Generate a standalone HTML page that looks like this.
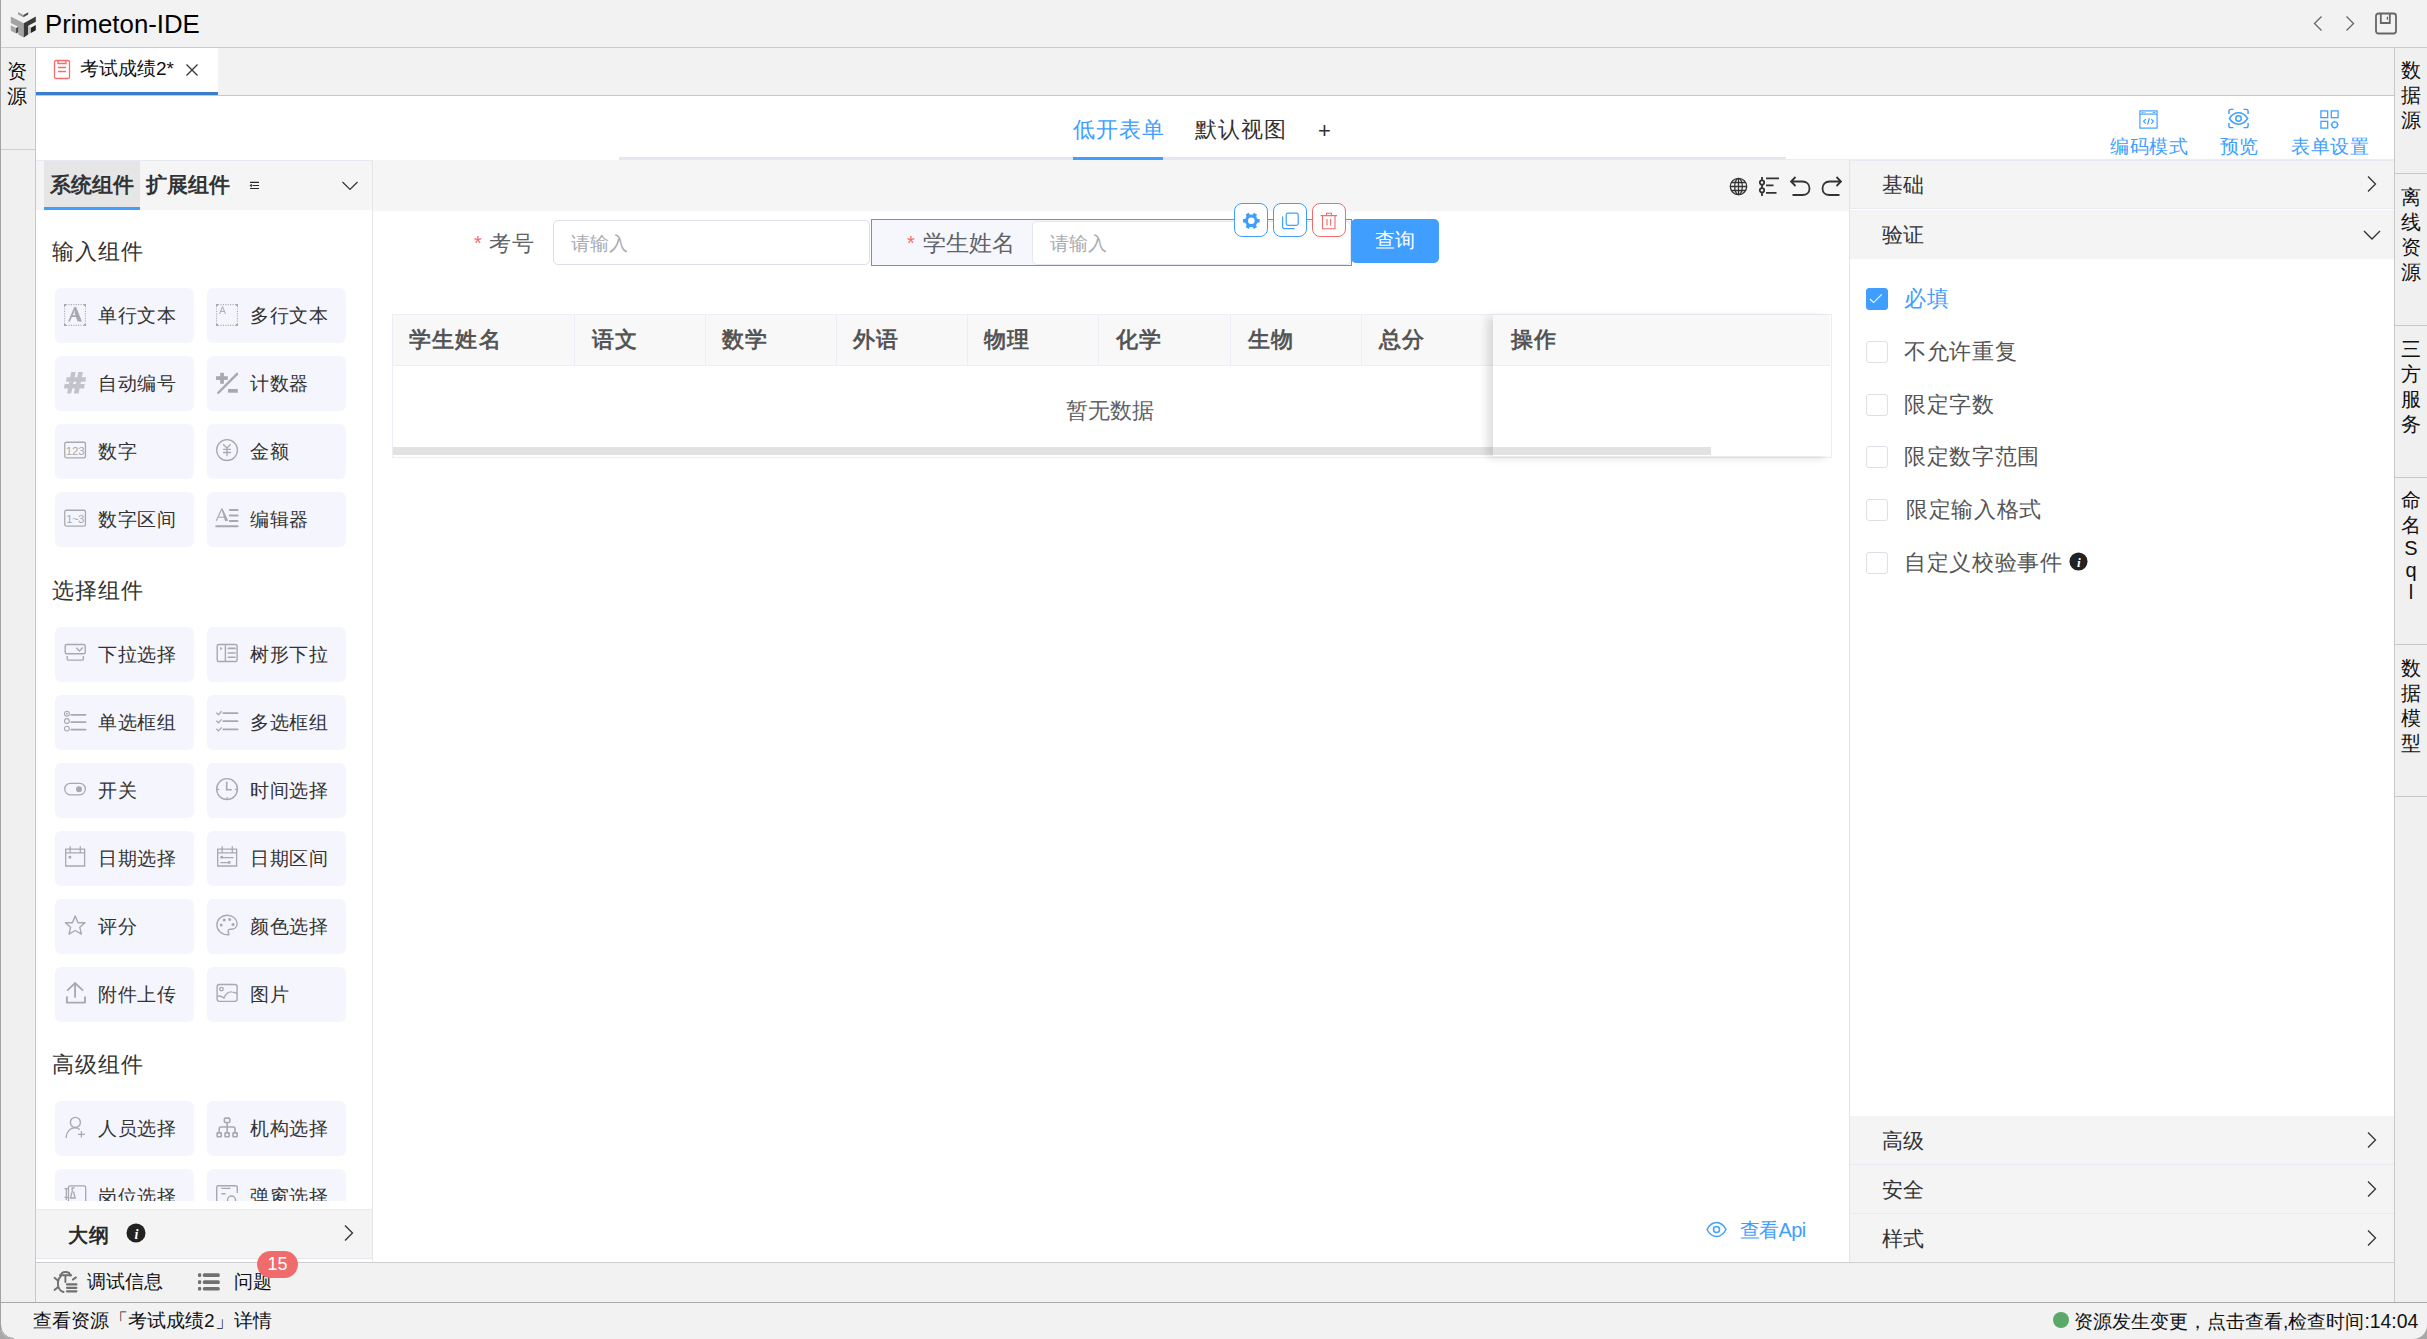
<!DOCTYPE html>
<html><head><meta charset="utf-8">
<style>
*{box-sizing:border-box;margin:0;padding:0}
html,body{width:2427px;height:1339px;overflow:hidden;background:#fff;font-family:"Liberation Sans",sans-serif;color:#333}
.a{position:absolute}
svg{display:block}
.vt{position:absolute;left:2398px;width:26px;font-size:20px;line-height:25px;color:#111;text-align:center}
.card{position:absolute;width:139px;height:55px;background:#f5f6fd;border-radius:6px}
.card .ic{position:absolute;left:8px;top:15px;width:24px;height:24px;overflow:visible}
.card .tx{position:absolute;left:43px;top:0px;line-height:55px;font-size:19px;letter-spacing:0.6px;color:#333;white-space:nowrap}
.sec{position:absolute;left:52px;font-size:22px;letter-spacing:1px;color:#333;line-height:30px}
.th{position:absolute;top:314px;height:52px;line-height:52px;font-size:22px;letter-spacing:1.2px;font-weight:bold;color:#555;padding-left:16px;border-right:1px solid #ebeef5}
.cb{position:absolute;left:1866px;width:22px;height:22px;border:1px solid #dcdfe6;border-radius:3px;background:#fff}
.cbl{position:absolute;left:1904px;font-size:22.2px;letter-spacing:0.7px;color:#555;line-height:30px;white-space:nowrap}
.rh{position:absolute;left:1850px;width:544px;height:49px;background:#f4f4f5;border-bottom:1px solid #e7eaf2}
.rh .t{position:absolute;left:32px;top:0;line-height:49px;font-size:21px;color:#333}
.rh svg{position:absolute;left:516px;top:15px}
</style></head><body>

<!-- title bar -->
<div class="a" style="left:0;top:0;width:2427px;height:48px;background:#f2f2f2;border-bottom:1px solid #cccccc"></div>
<div class="a" style="left:45px;top:5px;font-size:25.8px;line-height:38px;color:#000">Primeton-IDE</div>

<!-- left strip -->
<div class="a" style="left:0;top:48px;width:36px;height:1254px;background:#f0f0f0;border-right:1px solid #c8c8c8"></div>
<div class="a" style="left:0;top:149px;width:35px;height:1px;background:#cfcfcf"></div>
<div class="a" style="left:5px;top:59px;width:24px;font-size:20px;line-height:25px;color:#111;text-align:center">资<br>源</div>

<!-- right strip -->
<div class="a" style="left:2394px;top:48px;width:33px;height:1254px;background:#f0f0f0;border-left:1px solid #c8c8c8"></div>
<div class="a" style="left:2395px;top:173px;width:32px;height:1px;background:#c8c8c8"></div>
<div class="a" style="left:2395px;top:325px;width:32px;height:1px;background:#c8c8c8"></div>
<div class="a" style="left:2395px;top:477px;width:32px;height:1px;background:#c8c8c8"></div>
<div class="a" style="left:2395px;top:644px;width:32px;height:1px;background:#c8c8c8"></div>
<div class="a" style="left:2395px;top:796px;width:32px;height:1px;background:#c8c8c8"></div>
<div class="vt" style="top:58px">数<br>据<br>源</div>
<div class="vt" style="top:185px">离<br>线<br>资<br>源</div>
<div class="vt" style="top:337px">三<br>方<br>服<br>务</div>
<div class="vt" style="top:488px">命<br>名</div><div class="vt" style="top:537px;line-height:22px">S<br>q<br>l</div>
<div class="vt" style="top:656px">数<br>据<br>模<br>型</div>

<!-- tab bar -->
<div class="a" style="left:36px;top:48px;width:2358px;height:48px;background:#f2f2f2;border-bottom:1px solid #c8c8c8"></div>
<div class="a" style="left:36px;top:48px;width:182px;height:47px;background:#fff;border-bottom:3px solid #3b7fca"></div>
<div class="a" style="left:80px;top:54px;font-size:19px;line-height:30px;color:#111">考试成绩2*</div>

<!-- designer header -->
<div class="a" style="left:36px;top:96px;width:2358px;height:64px;background:#fff"></div>
<div class="a" style="left:619px;top:157px;width:1167px;height:3px;background:#e4e7ed"></div>
<div class="a" style="left:1073px;top:157px;width:90px;height:3px;background:#409eff"></div>
<div class="a" style="left:1073px;top:115px;font-size:22px;letter-spacing:1px;line-height:30px;color:#409eff">低开表单</div>
<div class="a" style="left:1195px;top:115px;font-size:22px;letter-spacing:1px;line-height:30px;color:#333">默认视图</div>
<div class="a" style="left:1318px;top:116px;font-size:22px;line-height:30px;color:#333">+</div>
<div class="a" style="left:2110px;top:132px;font-size:19px;letter-spacing:0.6px;line-height:30px;color:#409eff">编码模式</div>
<div class="a" style="left:2220px;top:132px;font-size:19px;line-height:30px;color:#409eff">预览</div>
<div class="a" style="left:2291px;top:132px;font-size:19px;letter-spacing:0.6px;line-height:30px;color:#409eff">表单设置</div>

<!-- left panel -->
<div class="a" style="left:36px;top:160px;width:337px;height:1102px;background:#fff;border-right:1px solid #e6e6e6"></div>
<div class="a" style="left:36px;top:160px;width:336px;height:50px;background:#f5f5f5"></div>
<div class="a" style="left:44px;top:160px;width:96px;height:50px;background:#e6e6e6;border-bottom:3px solid #409eff"></div>
<div class="a" style="left:50px;top:170px;font-size:21px;line-height:30px;font-weight:bold;color:#333">系统组件</div>
<div class="a" style="left:146px;top:170px;font-size:21px;line-height:30px;font-weight:bold;color:#333">扩展组件</div>

<div class="a" style="left:0;top:0;width:2427px;height:1339px;clip-path:inset(210px 0 138px 0)">
<div class="card" style="left:55px;top:288px"><svg class="ic" viewBox="0 0 24 24" width="24" height="24"><g fill="#a8a9ae"><path d="M1 1 H4.5 L1 4.5 Z M23 1 H19.5 L23 4.5 Z M1 23 H4.5 L1 19.5 Z M23 23 H19.5 L23 19.5 Z"/></g><path d="M5.5 1.6 H18.5 M5.5 22.4 H18.5 M1.6 5.5 V18.5 M22.4 5.5 V18.5" fill="none" stroke="#a8a9ae" stroke-width="1.1" stroke-dasharray="1.1 1.3"/><path d="M12.2 4.2 L6 18.5 M12.2 4.2 L18 18.5 M8.3 13.2 H15.8" fill="none" stroke="#a8a9ae" stroke-width="1.8"/><path d="M12.2 4.2 L17.8 18.6 H14.6 L11.6 10" fill="#a8a9ae"/></svg><div class="tx">单行文本</div></div>
<div class="card" style="left:207px;top:288px"><svg class="ic" viewBox="0 0 24 24" width="24" height="24"><g fill="#a8a9ae"><path d="M1 1 H4.5 L1 4.5 Z M23 1 H19.5 L23 4.5 Z M1 23 H4.5 L1 19.5 Z M23 23 H19.5 L23 19.5 Z"/></g><path d="M5.5 1.6 H18.5 M5.5 22.4 H18.5 M1.6 5.5 V18.5 M22.4 5.5 V18.5" fill="none" stroke="#a8a9ae" stroke-width="1.1" stroke-dasharray="1.1 1.3"/><path d="M7.5 3.5 L4.5 11 M7.5 3.5 L10.5 11 M5.6 8.4 H9.4" fill="none" stroke="#a8a9ae" stroke-width="1"/></svg><div class="tx">多行文本</div></div>
<div class="card" style="left:55px;top:356px"><svg class="ic" viewBox="0 0 24 24" width="24" height="24"><g fill="#c3c4ca"><polygon points="8.2,1 12.7,1 8.2,22.6 4,22.6"/><polygon points="15.2,1 19.9,1 15.6,22.6 10.9,22.6"/><polygon points="3.6,6.2 23,6.2 22.5,10.7 3,10.7"/><polygon points="1.6,13.1 21.7,13.1 21.2,17.6 1,17.6"/></g></svg><div class="tx">自动编号</div></div>
<div class="card" style="left:207px;top:356px"><svg class="ic" viewBox="0 0 24 24" width="24" height="24"><g fill="#a8a9ae"><rect x="1" y="5.2" width="11.8" height="3.7"/><rect x="5.2" y="1.8" width="3.7" height="11"/><rect x="13" y="18" width="9.8" height="3.7"/><polygon points="21.5,1.8 23,1.8 23,3.8 4,22.8 2,22.8 2,21.6"/></g></svg><div class="tx">计数器</div></div>
<div class="card" style="left:55px;top:424px"><svg class="ic" viewBox="0 0 24 24" width="24" height="24"><rect x="1.75" y="3.25" width="20.7" height="15.6" rx="1.6" fill="none" stroke="#a8a9ae" stroke-width="1.3"/><text x="12.1" y="15.7" font-family="Liberation Sans" font-size="11.6" fill="#a8a9ae" text-anchor="middle" letter-spacing="-0.3">123</text></svg><div class="tx">数字</div></div>
<div class="card" style="left:207px;top:424px"><svg class="ic" viewBox="0 0 24 24" width="24" height="24"><circle cx="12.05" cy="11.1" r="10.4" fill="none" stroke="#a8a9ae" stroke-width="1.3"/><path d="M8.1 5.2 L12 9 L15.7 5.2 M12 9 V17.3 M8.1 10.3 H15.9 M8.1 13.5 H15.9" fill="none" stroke="#a8a9ae" stroke-width="1.3"/></svg><div class="tx">金额</div></div>
<div class="card" style="left:55px;top:492px"><svg class="ic" viewBox="0 0 24 24" width="24" height="24"><rect x="1.75" y="3.25" width="20.7" height="15.8" rx="1.6" fill="none" stroke="#a8a9ae" stroke-width="1.3"/><text x="12.1" y="15.6" font-family="Liberation Sans" font-size="11.4" fill="#a8a9ae" text-anchor="middle" letter-spacing="-0.6">1~3</text></svg><div class="tx">数字区间</div></div>
<div class="card" style="left:207px;top:492px"><svg class="ic" viewBox="0 0 24 24" width="24" height="24"><path d="M6.8 1.8 L1.3 13.8 M6.8 1.8 L12.6 13.8" fill="none" stroke="#a8a9ae" stroke-width="1.2"/><polygon points="6.4,1.8 7.6,1.8 12.9,13.9 10,13.9" fill="#a8a9ae"/><path d="M3.5 10.2 H10.5" stroke="#a8a9ae" stroke-width="1.1"/><path d="M14.8 3 H22.6 M14.8 8.5 H22.6 M14.8 13.9 H22.6 M1.2 19.2 H22.6" stroke="#a8a9ae" stroke-width="2" stroke-linecap="round"/></svg><div class="tx">编辑器</div></div>
<div class="card" style="left:55px;top:627px"><svg class="ic" viewBox="0 0 24 24" width="24" height="24"><rect x="2.2" y="2.5" width="20" height="9.2" rx="1.5" fill="none" stroke="#a8a9ae" stroke-width="1.4"/><path d="M13.3 5.8 L16.4 9 L19.8 5.6" fill="none" stroke="#a8a9ae" stroke-width="1.4"/><path d="M4.1 14.1 V17 Q4.1 18.1 5.2 18.1 H19.3 Q20.4 18.1 20.4 17 V14.1" fill="none" stroke="#a8a9ae" stroke-width="1.4"/></svg><div class="tx">下拉选择</div></div>
<div class="card" style="left:207px;top:627px"><svg class="ic" viewBox="0 0 24 24" width="24" height="24"><rect x="2.2" y="2.5" width="19.9" height="17" rx="1.5" fill="none" stroke="#a8a9ae" stroke-width="1.4"/><path d="M10.4 2.5 V19.5" fill="none" stroke="#a8a9ae" stroke-width="1.4"/><polygon points="5.2,5 7.6,6.6 5.2,8.2" fill="#a8a9ae"/><path d="M13.3 6.4 H20.1 M13.3 11 H20.1 M13.3 15.3 H20.1" stroke="#a8a9ae" stroke-width="1.6" stroke-linecap="round"/></svg><div class="tx">树形下拉</div></div>
<div class="card" style="left:55px;top:695px"><svg class="ic" viewBox="0 0 24 24" width="24" height="24"><circle cx="3.9" cy="3.7" r="2.4" fill="none" stroke="#a8a9ae" stroke-width="1.1"/><circle cx="3.9" cy="3.7" r="0.9" fill="#a8a9ae"/><circle cx="3.9" cy="11" r="2.4" fill="none" stroke="#a8a9ae" stroke-width="1.1"/><circle cx="3.9" cy="18.6" r="2.4" fill="none" stroke="#a8a9ae" stroke-width="1.1"/><path d="M8.3 4.8 H22.6 M8.3 12.2 H22.6 M8.3 19.6 H22.6" stroke="#a8a9ae" stroke-width="1.8" stroke-linecap="round"/></svg><div class="tx">单选框组</div></div>
<div class="card" style="left:207px;top:695px"><svg class="ic" viewBox="0 0 24 24" width="24" height="24"><path d="M1.3 2.6 L3.4 4.7 L6.6 1.3 M1.3 10.7 L3.4 12.8 L6.6 9.4 M1.3 18.8 L3.4 20.9 L6.6 17.5" fill="none" stroke="#a8a9ae" stroke-width="1.3"/><path d="M8.3 3.1 H22.6 M8.3 11.1 H22.6 M8.3 19.4 H22.6" stroke="#a8a9ae" stroke-width="1.8" stroke-linecap="round"/></svg><div class="tx">多选框组</div></div>
<div class="card" style="left:55px;top:763px"><svg class="ic" viewBox="0 0 24 24" width="24" height="24"><rect x="1.7" y="5.4" width="20.7" height="11.4" rx="5.7" fill="none" stroke="#a8a9ae" stroke-width="1.3"/><circle cx="16" cy="11.2" r="3" fill="#a8a9ae"/></svg><div class="tx">开关</div></div>
<div class="card" style="left:207px;top:763px"><svg class="ic" viewBox="0 0 24 24" width="24" height="24"><circle cx="12.05" cy="11.05" r="10.4" fill="none" stroke="#a8a9ae" stroke-width="1.4"/><path d="M11.7 3.6 V11.8 H16.7" fill="none" stroke="#a8a9ae" stroke-width="1.6"/><path d="M2 11.3 H4.4 M19.9 11.3 H22 M12.1 19 V21.2" fill="none" stroke="#a8a9ae" stroke-width="1.2"/></svg><div class="tx">时间选择</div></div>
<div class="card" style="left:55px;top:831px"><svg class="ic" viewBox="0 0 24 24" width="24" height="24"><path d="M2.7 3.2 H21.6 V20 H2.7 Z M2.7 6.8 H21.6 M7.2 0.2 V6.6 M17.3 0.2 V6.6" fill="none" stroke="#a8a9ae" stroke-width="1.3"/><rect x="5.6" y="9.9" width="2.6" height="2.6" fill="#a8a9ae"/></svg><div class="tx">日期选择</div></div>
<div class="card" style="left:207px;top:831px"><svg class="ic" viewBox="0 0 24 24" width="24" height="24"><path d="M2.7 3.2 H21.6 V20 H2.7 Z M2.7 6.8 H21.6 M7.2 0.2 V6.6 M17.3 0.2 V6.6" fill="none" stroke="#a8a9ae" stroke-width="1.3"/><path d="M5.4 11.6 H18.6 M5.4 16.6 H15" stroke="#a8a9ae" stroke-width="1.4"/><rect x="5.5" y="9.9" width="2.5" height="2.4" fill="#a8a9ae"/><rect x="13" y="15.1" width="2.5" height="2.5" fill="#a8a9ae"/></svg><div class="tx">日期区间</div></div>
<div class="card" style="left:55px;top:899px"><svg class="ic" viewBox="0 0 24 24" width="24" height="24"><polygon points="12.2,1.9 15,8.7 22,8.8 16.8,13.3 18.4,20.1 12.2,16.5 6,20.1 7.6,13.3 2.4,8.8 9.4,8.7" fill="none" stroke="#a8a9ae" stroke-width="1.4" stroke-linejoin="round"/></svg><div class="tx">评分</div></div>
<div class="card" style="left:207px;top:899px"><svg class="ic" viewBox="0 0 24 24" width="24" height="24"><path d="M13.3 20.8 C6.6 20.8 1.9 16.4 1.9 11 C1.9 5.5 6.5 1.2 12 1.2 C17.8 1.2 22.1 5 22.1 9.8 C22.1 13.2 19.5 15.3 16 15.3 H15.3 C13.5 15.3 12.6 16.6 13.3 18.1 C13.9 19.4 14.2 20.8 13.3 20.8 Z" fill="none" stroke="#a8a9ae" stroke-width="1.4"/><circle cx="6.2" cy="11" r="1.5" fill="#a8a9ae"/><circle cx="9.2" cy="6.1" r="1.5" fill="#a8a9ae"/><circle cx="14.7" cy="5.5" r="1.5" fill="#a8a9ae"/><circle cx="18" cy="10.5" r="1.5" fill="#a8a9ae"/></svg><div class="tx">颜色选择</div></div>
<div class="card" style="left:55px;top:967px"><svg class="ic" viewBox="0 0 24 24" width="24" height="24"><path d="M4.7 8.2 L12.1 1 L19.6 8.2 M12.1 1.8 V14.9" fill="none" stroke="#a8a9ae" stroke-width="1.8" stroke-linecap="round"/><path d="M3.9 15.2 V20.6 H22 V15.2" fill="none" stroke="#a8a9ae" stroke-width="1.9" stroke-linecap="round" stroke-linejoin="round"/></svg><div class="tx">附件上传</div></div>
<div class="card" style="left:207px;top:967px"><svg class="ic" viewBox="0 0 24 24" width="24" height="24"><rect x="2.1" y="2.5" width="20" height="16.9" rx="2.3" fill="none" stroke="#a8a9ae" stroke-width="1.4"/><circle cx="6.5" cy="7.1" r="1.8" fill="none" stroke="#a8a9ae" stroke-width="1.3"/><path d="M2.1 14.3 C5 13.3 7 14.4 8.9 16 C10.8 11.2 13.8 9.7 16.7 9.9 C19 10 20.6 10.8 22.1 11.6" fill="none" stroke="#a8a9ae" stroke-width="1.4"/></svg><div class="tx">图片</div></div>
<div class="card" style="left:55px;top:1101px"><svg class="ic" viewBox="0 0 24 24" width="24" height="24"><circle cx="12.4" cy="6.4" r="5" fill="none" stroke="#a8a9ae" stroke-width="1.4"/><path d="M3.1 21.4 C3.5 15.5 7.3 11.8 12 11.8 C13.8 11.8 15.2 12.3 16.4 13.2" fill="none" stroke="#a8a9ae" stroke-width="1.4" stroke-linecap="round"/><path d="M14.9 18.4 H21.8 M18.4 15.2 V21.6" fill="none" stroke="#a8a9ae" stroke-width="1.3"/></svg><div class="tx">人员选择</div></div>
<div class="card" style="left:207px;top:1101px"><svg class="ic" viewBox="0 0 24 24" width="24" height="24"><rect x="9.4" y="2.1" width="5.4" height="4.4" rx="1" fill="none" stroke="#a8a9ae" stroke-width="1.6"/><path d="M12.1 6.5 V16.2 M4.2 16.2 V12.5 Q4.2 11 5.7 11 H18.5 Q20 11 20 12.5 V16.2" fill="none" stroke="#a8a9ae" stroke-width="1.6"/><rect x="2.1" y="16.9" width="4.2" height="3.9" rx="0.6" fill="none" stroke="#a8a9ae" stroke-width="1.6"/><rect x="10" y="16.9" width="4.2" height="3.9" rx="0.6" fill="none" stroke="#a8a9ae" stroke-width="1.6"/><rect x="18" y="16.9" width="4.2" height="3.9" rx="0.6" fill="none" stroke="#a8a9ae" stroke-width="1.6"/></svg><div class="tx">机构选择</div></div>
<div class="card" style="left:55px;top:1169px"><svg class="ic" viewBox="0 0 24 24" width="24" height="24"><path d="M5.5 22 V3.5 Q5.5 1.8 7.2 1.8 H21 Q22.7 1.8 22.7 3.5 V22" fill="none" stroke="#a8a9ae" stroke-width="1.3"/><path d="M1.5 4.6 H5 M3.3 4.6 V16 M1.5 13.4 H5" fill="none" stroke="#a8a9ae" stroke-width="1.3"/><path d="M8.5 3.8 H11.8 M9.2 3.8 V7.5 L7.5 14 H12.2 L10.5 7.5" fill="none" stroke="#a8a9ae" stroke-width="1.3"/></svg><div class="tx">岗位选择</div></div>
<div class="card" style="left:207px;top:1169px"><svg class="ic" viewBox="0 0 24 24" width="24" height="24"><path d="M1.7 22 V3.5 Q1.7 1.8 3.4 1.8 H20.6 Q22.3 1.8 22.3 3.5 V9" fill="none" stroke="#a8a9ae" stroke-width="1.4"/><path d="M6.4 4.4 H15.5 M6.4 9.7 H10.5" stroke="#a8a9ae" stroke-width="1.4"/><circle cx="16.5" cy="16" r="4" fill="none" stroke="#a8a9ae" stroke-width="1.4"/></svg><div class="tx">弹窗选择</div></div>
</div>
<div class="sec" style="top:237px">输入组件</div>
<div class="sec" style="top:576px">选择组件</div>
<div class="sec" style="top:1050px">高级组件</div>

<!-- canvas -->
<div class="a" style="left:373px;top:160px;width:1476px;height:51px;background:#f5f5f5"></div>
<!-- toolbar icons -->
<svg class="a" style="left:1729px;top:177px" width="19" height="19" viewBox="0 0 19 19" fill="none" stroke="#333" stroke-width="1.3"><circle cx="9.5" cy="9.5" r="8.2"/><path d="M1.3 9.5 H17.7 M9.5 1.3 V17.7 M3 5.5 H16 M3 13.5 H16"/><ellipse cx="9.5" cy="9.5" rx="3.8" ry="8.2"/></svg>
<svg class="a" style="left:1759px;top:176px" width="21" height="21" viewBox="0 0 21 21" fill="none" stroke="#333" stroke-width="1.8"><path d="M3 1 V20"/><circle cx="3" cy="6.5" r="2.2" fill="#f5f5f5"/><circle cx="3" cy="14.3" r="2.2" fill="#f5f5f5"/><path d="M7 2.3 H20 M7 9.3 H14.5 M7 16.8 H17.5"/></svg>
<svg class="a" style="left:1790px;top:176px" width="21" height="21" viewBox="0 0 21 21" fill="none" stroke="#333" stroke-width="1.8"><path d="M5.5 1 L1 5.5 L5.5 10 M1 5.5 H12.5 C16.5 5.5 19.5 8.3 19.5 12.5 C19.5 16.5 16.5 19 12.5 19 H2.5"/></svg>
<svg class="a" style="left:1821px;top:176px" width="21" height="21" viewBox="0 0 21 21" fill="none" stroke="#333" stroke-width="1.8"><path d="M15.5 1 L20 5.5 L15.5 10 M20 5.5 H8.5 C4.5 5.5 1.5 8.3 1.5 12.5 C1.5 16.5 4.5 19 8.5 19 H18.5"/></svg>

<!-- form -->
<div class="a" style="left:474px;top:228px;font-size:20px;line-height:30px;color:#f56c6c">*</div>
<div class="a" style="left:489px;top:229px;font-size:22px;letter-spacing:1px;line-height:30px;color:#606266">考号</div>
<div class="a" style="left:553px;top:220px;width:317px;height:45px;border:1px solid #dcdfe6;border-radius:5px;background:#fff"></div>
<div class="a" style="left:571px;top:229px;font-size:19px;line-height:30px;color:#a8abb2">请输入</div>

<div class="a" style="left:871px;top:219px;width:481px;height:47px;border:1px solid #409eff;background:#f6f7fc"></div>
<div class="a" style="left:1032px;top:221px;width:319px;height:44px;border:1px solid #e4e7ed;border-radius:5px;background:#fff"></div>
<div class="a" style="left:907px;top:228px;font-size:20px;line-height:30px;color:#f56c6c">*</div>
<div class="a" style="left:923px;top:229px;font-size:22.6px;line-height:30px;color:#606266">学生姓名</div>
<div class="a" style="left:1050px;top:229px;font-size:19px;line-height:30px;color:#a8abb2">请输入</div>

<div class="a" style="left:1234px;top:203px;width:34px;height:34px;border:1px solid #409eff;border-radius:8px;background:#fff"></div>

<div class="a" style="left:1273px;top:203px;width:34px;height:34px;border:1px solid #409eff;border-radius:8px;background:#fff"></div>

<div class="a" style="left:1312px;top:203px;width:34px;height:34px;border:1px solid #f56c6c;border-radius:8px;background:#fff"></div>


<svg class="a" style="left:1230px;top:198px" width="120" height="44" viewBox="0 0 120 44">
<g fill="#409eff"><circle cx="21.3" cy="22.8" r="6.4"/><rect x="26" y="21" width="3.6" height="3.6" transform="rotate(0 21.3 22.8)" /><rect x="26" y="21" width="3.6" height="3.6" transform="rotate(60 21.3 22.8)" /><rect x="26" y="21" width="3.6" height="3.6" transform="rotate(120 21.3 22.8)" /><rect x="26" y="21" width="3.6" height="3.6" transform="rotate(180 21.3 22.8)" /><rect x="26" y="21" width="3.6" height="3.6" transform="rotate(240 21.3 22.8)" /><rect x="26" y="21" width="3.6" height="3.6" transform="rotate(300 21.3 22.8)" /></g><circle cx="21.3" cy="22.8" r="3.3" fill="#fff"/>
<g fill="none" stroke="#409eff" stroke-width="1.2"><rect x="56.2" y="15.2" width="12" height="12.2" rx="1.8"/><path d="M52.6 18.6 V28.4 Q52.6 30.6 54.8 30.6 H64.6"/></g>
<g fill="none" stroke="#f56c6c" stroke-width="1.1"><path d="M96.5 17.3 V15.2 H101.5 V17.3 M90.5 17.6 H107 M92.5 17.6 V30.7 H105 V17.6 M97 21 V27.6 M100.6 21 V27.6"/></g>
</svg>
<div class="a" style="left:1351px;top:219px;width:88px;height:44px;background:#409eff;border-radius:5px"></div>
<div class="a" style="left:1375px;top:225px;font-size:20px;line-height:30px;color:#fff">查询</div>

<!-- table -->
<div class="a" style="left:392px;top:314px;width:1440px;height:144px;border:1px solid #ebeef5;background:#fff"></div>
<div class="a" style="left:393px;top:315px;width:1437px;height:51px;background:#f8f8f8;border-bottom:1px solid #ebeef5"></div>
<div class="th" style="left:393px;width:182px">学生姓名</div>
<div class="th" style="left:574px;width:132px;padding-left:17.5px">语文</div>
<div class="th" style="left:705px;width:132px;padding-left:17px">数学</div>
<div class="th" style="left:836px;width:132px;padding-left:17px">外语</div>
<div class="th" style="left:967px;width:132px;padding-left:17px">物理</div>
<div class="th" style="left:1098px;width:133px;padding-left:17.5px">化学</div>
<div class="th" style="left:1230px;width:132px;padding-left:17.5px">生物</div>
<div class="th" style="left:1361px;width:132px;border-right:none;padding-left:17.5px">总分</div>
<div class="a" style="left:393px;top:447px;width:1318px;height:8px;background:#e2e2e2"></div>
<div class="a" style="left:1066px;top:396px;font-size:22.3px;line-height:30px;color:#606266">暂无数据</div>
<div class="a" style="left:1493px;top:315px;width:338px;height:141px;background:#fff;box-shadow:-6px 2px 8px rgba(0,0,0,0.12)"></div>
<div class="a" style="left:1493px;top:315px;width:337px;height:51px;background:#f8f8f8;border-bottom:1px solid #ebeef5"></div>
<div class="a" style="left:1493px;top:447px;width:218px;height:8px;background:#e2e2e2"></div>
<div class="th" style="left:1493px;width:337px;border-right:none;padding-left:17.5px">操作</div>

<!-- api link -->
<svg class="a" style="left:1706px;top:1221px" width="21" height="17" viewBox="0 0 21 17" fill="none" stroke="#409eff" stroke-width="1.5"><path d="M1 8.5 C4 3 8 1.5 10.5 1.5 C13 1.5 17 3 20 8.5 C17 14 13 15.5 10.5 15.5 C8 15.5 4 14 1 8.5 Z"/><circle cx="10.5" cy="8.5" r="3"/></svg>
<div class="a" style="left:1740px;top:1215px;font-size:20px;letter-spacing:-0.7px;line-height:30px;color:#409eff">查看Api</div>


<!-- right panel -->
<div class="a" style="left:1849px;top:160px;width:1px;height:1102px;background:#e4e4e4"></div>
<div class="a" style="left:1850px;top:160px;width:544px;height:1px;background:#e8ebf2;z-index:2"></div><div class="rh" style="top:160px"><div class="t">基础</div><svg width="12" height="18" viewBox="0 0 12 18" fill="none" stroke="#333" stroke-width="1.3"><path d="M2 1.5 L9.5 9 L2 16.5"/></svg></div>
<div class="rh" style="top:210px;border-bottom:none"><div class="t">验证</div><svg style="left:513px;top:19px" width="18" height="12" viewBox="0 0 18 12" fill="none" stroke="#333" stroke-width="1.4"><path d="M1 2 L9 10 L17 2"/></svg></div>
<div class="cb" style="top:288px;background:#409eff;border-color:#409eff"></div>
<svg class="a" style="left:1866px;top:288px" width="22" height="22" viewBox="0 0 22 22" fill="none" stroke="#fff" stroke-width="1.1"><path d="M3.9 11 L7.6 14.6 L15.8 6.4"/></svg>
<div class="cbl" style="top:284px;color:#409eff">必填</div>
<div class="cb" style="top:341px"></div><div class="cbl" style="top:337px">不允许重复</div>
<div class="cb" style="top:394px"></div><div class="cbl" style="top:390px">限定字数</div>
<div class="cb" style="top:446px"></div><div class="cbl" style="top:442px">限定数字范围</div>
<div class="cb" style="top:499px"></div><div class="cbl" style="top:495px;left:1906px">限定输入格式</div>
<div class="cb" style="top:552px"></div><div class="cbl" style="top:548px">自定义校验事件</div>
<svg class="a" style="left:2069px;top:552px" width="19" height="19" viewBox="0 0 20 20"><circle cx="10" cy="10" r="9.5" fill="#222"/><text x="10.5" y="15.5" font-family="Liberation Serif" font-style="italic" font-weight="bold" font-size="14" fill="#fff" text-anchor="middle">i</text></svg>
<div class="rh" style="top:1116px"><div class="t">高级</div><svg width="12" height="18" viewBox="0 0 12 18" fill="none" stroke="#333" stroke-width="1.3"><path d="M2 1.5 L9.5 9 L2 16.5"/></svg></div>
<div class="rh" style="top:1165px"><div class="t">安全</div><svg width="12" height="18" viewBox="0 0 12 18" fill="none" stroke="#333" stroke-width="1.3"><path d="M2 1.5 L9.5 9 L2 16.5"/></svg></div>
<div class="rh" style="top:1214px;height:48px;border-bottom:none"><div class="t">样式</div><svg width="12" height="18" viewBox="0 0 12 18" fill="none" stroke="#333" stroke-width="1.3"><path d="M2 1.5 L9.5 9 L2 16.5"/></svg></div>


<!-- bottom panel -->
<div class="a" style="left:36px;top:1262px;width:2358px;height:40px;background:#f2f2f2;border-top:1px solid #cfcfcf"></div>
<div class="a" style="left:87px;top:1267px;font-size:19px;line-height:30px;color:#111">调试信息</div>
<div class="a" style="left:234px;top:1267px;font-size:19px;line-height:30px;color:#111">问题</div>

<!-- status bar -->
<div class="a" style="left:0;top:1302px;width:2427px;height:37px;background:#f2f2f2;border-top:1px solid #a8a8a8"></div>
<div class="a" style="left:33px;top:1306px;font-size:19px;line-height:30px;color:#111">查看资源「考试成绩2」详情</div>
<div class="a" style="left:2074px;top:1306px;font-size:19.4px;line-height:30px;color:#111;white-space:nowrap">资源发生变更，点击查看,检查时间:14:04</div>


<!-- header icons -->
<svg class="a" style="left:2139px;top:110px" width="19" height="19" viewBox="0 0 21 21" fill="none" stroke="#409eff" stroke-width="1.3"><rect x="1" y="1" width="19" height="19"/><path d="M1 4.5 H20"/><path d="M3 2.8 H5 M6 2.8 H7 M15 2.8 H18" stroke-width="1"/><path d="M7.5 10 L5 12.5 L7.5 15 M13.5 10 L16 12.5 L13.5 15 M11.5 9 L9.5 16"/></svg>
<svg class="a" style="left:2228px;top:108px" width="21" height="21" viewBox="0 0 23 22" fill="none" stroke="#409eff" stroke-width="1.6"><path d="M1 6 V3 A2 2 0 0 1 3 1 H6 M17 1 H20 A2 2 0 0 1 22 3 V6 M22 16 V19 A2 2 0 0 1 20 21 H17 M6 21 H3 A2 2 0 0 1 1 19 V16"/><path d="M1.5 11 C4.5 6.5 8 4.8 11.5 4.8 C15 4.8 18.5 6.5 21.5 11 C18.5 15.5 15 17.2 11.5 17.2 C8 17.2 4.5 15.5 1.5 11 Z"/><circle cx="11.5" cy="11" r="3"/></svg>
<svg class="a" style="left:2320px;top:110px" width="19" height="19" viewBox="0 0 21 21" fill="none" stroke="#409eff" stroke-width="1.4"><rect x="1" y="1" width="7.5" height="7.5"/><rect x="12.5" y="1" width="7.5" height="7.5"/><rect x="1" y="12.5" width="7.5" height="7.5"/><circle cx="16.2" cy="16.2" r="3.2"/><path d="M16.2 11.8 V13 M16.2 19.4 V20.6 M11.8 16.2 H13 M19.4 16.2 H20.6" stroke-width="1.2"/></svg>

<!-- title logo -->
<svg class="a" style="left:5px;top:5px" width="40" height="37" viewBox="0 0 1448 1339">
<polygon points="470,250 665,360 665,440 470,340" fill="#9c9c9c"/>
<polygon points="665,360 840,260 840,340 665,440" fill="#4a4a4a"/>
<polygon points="210,420 680,660 680,1180 480,1070 480,790 210,650" fill="#a3a3a3"/>
<polygon points="680,660 1115,420 1115,610 840,750 840,1070 680,1180" fill="#3a3a3a"/>
<polygon points="210,730 400,830 400,1030 210,930" fill="#a8a8a8"/>
<polygon points="400,830 480,790 480,990 400,1030" fill="#474747"/>
<polygon points="860,760 940,810 940,1010 860,1060" fill="#bdbdbd"/>
<polygon points="940,820 1115,720 1115,910 940,1010" fill="#222"/>
</svg>
<!-- window controls -->
<svg class="a" style="left:2312px;top:15px" width="12" height="17" viewBox="0 0 12 17" fill="none" stroke="#666" stroke-width="1.3"><path d="M9.5 1.5 L2.5 8.5 L9.5 15.5"/></svg>
<svg class="a" style="left:2344px;top:15px" width="12" height="17" viewBox="0 0 12 17" fill="none" stroke="#666" stroke-width="1.3"><path d="M2.5 1.5 L9.5 8.5 L2.5 15.5"/></svg>
<svg class="a" style="left:2375px;top:12px" width="22" height="23" viewBox="0 0 22 23" fill="none" stroke="#666" stroke-width="1.8"><rect x="1" y="1.5" width="20" height="20" rx="2.5"/><path d="M5.8 1.5 V11 H14.8 V1.5"/><path d="M12.4 4.7 V7.7" stroke-width="1.3"/></svg>

<!-- tab icons -->
<svg class="a" style="left:53px;top:59px" width="18" height="21" viewBox="0 0 18 21" fill="none" stroke="#f56c6c" stroke-width="1.3"><rect x="1.5" y="1.5" width="15" height="18" rx="1.5"/><path d="M5 1.5 V4.5 H13 V1.5 M5 8.5 H13 M5 12.5 H13"/></svg>
<svg class="a" style="left:185px;top:63px" width="14" height="14" viewBox="0 0 14 14" fill="none" stroke="#333" stroke-width="1.3"><path d="M1.5 1.5 L12.5 12.5 M12.5 1.5 L1.5 12.5"/></svg>

<div class="a" style="left:1786px;top:159px;width:608px;height:1px;background:#f2e9ea"></div>
<!-- left panel header icons -->
<div class="a" style="left:36px;top:160px;width:336px;height:1px;background:#e6e9f1"></div>
<svg class="a" style="left:248px;top:179px" width="13" height="12" viewBox="0 0 13 12" fill="none" stroke="#2a2a2a" stroke-width="1.1"><path d="M2 3.4 H11 M4.5 6.5 H11 M2 9.5 H11"/><path d="M1.8 6.5 L3.6 5.3 V7.7 Z" fill="#2a2a2a" stroke-width="0.6"/></svg>
<svg class="a" style="left:341px;top:180px" width="18" height="12" viewBox="0 0 18 12" fill="none" stroke="#333" stroke-width="1.2"><path d="M1.5 2 L9 9.5 L16.5 2"/></svg>

<!-- outline section -->
<div class="a" style="left:36px;top:1209px;width:336px;height:50px;background:#f4f4f4;border-top:1px solid #e6ebf3;border-bottom:1px solid #e4e8f0"></div>
<div class="a" style="left:68px;top:1220px;font-size:20px;letter-spacing:1px;line-height:30px;font-weight:bold;color:#2a2a2a">大纲</div>
<svg class="a" style="left:126px;top:1223px" width="20" height="20" viewBox="0 0 20 20"><circle cx="10" cy="10" r="9.5" fill="#222"/><text x="10.5" y="15.5" font-family="Liberation Serif" font-style="italic" font-weight="bold" font-size="14" fill="#fff" text-anchor="middle">i</text></svg>
<svg class="a" style="left:343px;top:1224px" width="12" height="18" viewBox="0 0 12 18" fill="none" stroke="#333" stroke-width="1.3"><path d="M2 1.5 L9.5 9 L2 16.5"/></svg>

<!-- bottom panel icons -->
<svg class="a" style="left:48px;top:1265px" width="32" height="30" viewBox="0 0 32 30" fill="none" stroke="#707070" stroke-width="1.9" stroke-linecap="round"><path d="M13 10.5 C13 8 15 7 17.4 7 C19.8 7 22 8 22.3 10.5"/><path d="M11.9 10.3 H23.2 M17.4 10.3 V17"/><path d="M12.6 11.5 C10 14 9.3 18 10.5 22 C11.5 25 13.5 26.5 15.6 27"/><path d="M6.5 12.8 L10.2 15.8 M6.5 25 L9.8 22.3 M24.8 14.6 L28 12.4"/><path d="M19 19.4 H28.4 M19 22.8 H28.4 M19 26.3 H28.4" stroke-width="2.2"/></svg>
<svg class="a" style="left:197px;top:1272px" width="24" height="20" viewBox="0 0 24 20" fill="#707070"><rect x="1" y="1.2" width="3.2" height="3.7" rx="1"/><rect x="5.8" y="1.2" width="17" height="3.7" rx="1.5"/><rect x="1" y="8.2" width="3.2" height="3.7" rx="1"/><rect x="5.8" y="8.2" width="17" height="3.7" rx="1.5"/><rect x="1" y="14.9" width="3.2" height="3.7" rx="1"/><rect x="5.8" y="14.9" width="17" height="3.7" rx="1.5"/></svg>
<div class="a" style="left:257px;top:1251px;width:41px;height:27px;border-radius:14px;background:#f06c6c;color:#fff;font-size:18px;line-height:27px;text-align:center">15</div>

<!-- status dot -->
<div class="a" style="left:2053px;top:1312px;width:16px;height:16px;border-radius:50%;background:#5aa86a"></div>


<!-- window frame -->
<div class="a" style="left:0;top:0;width:1px;height:1339px;background:#a3a3a3"></div>
<svg class="a" style="left:0;top:1325px" width="14" height="14" viewBox="0 0 14 14"><path d="M0 0 V14 H14 A14 14 0 0 1 0 0 Z" fill="#a8a8a8"/><path d="M0.5 0 A13.5 13.5 0 0 0 14 13.5" fill="none" stroke="#9a9a9a" stroke-width="1"/></svg>
<svg class="a" style="left:2413px;top:1325px" width="14" height="14" viewBox="0 0 14 14"><path d="M14 0 V14 H0 A14 14 0 0 0 14 0 Z" fill="#a8a8a8"/></svg>

</body></html>
